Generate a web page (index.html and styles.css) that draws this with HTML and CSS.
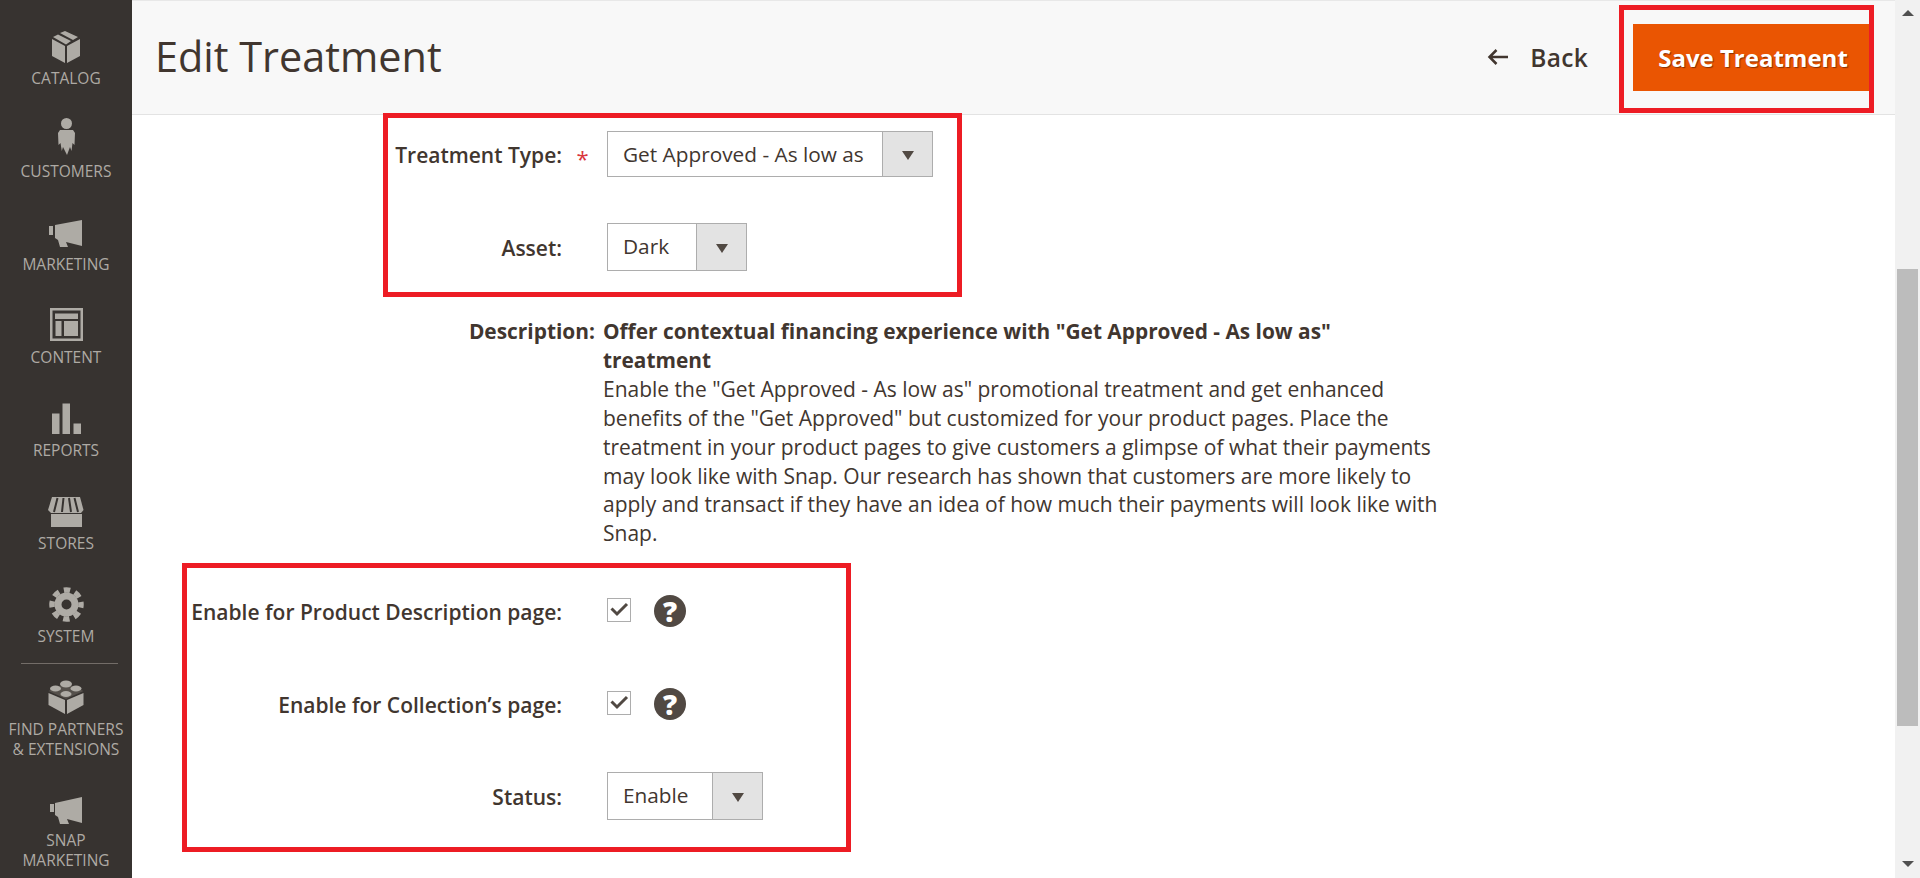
FILE: index.html
```html
<!DOCTYPE html>
<html lang="en">
<head>
<meta charset="utf-8">
<title>Edit Treatment</title>
<link rel="stylesheet" href="styles.css">
</head>
<body>
<div class="app">
  <nav class="sidebar">
    <div class="nav-item">
      <svg class="nav-icon" viewBox="0 0 132 45"><path d="M52 16 65 23V40L52 33ZM67 23 80 16V33L67 40ZM53 14 58 11.500 71 18 66 21.500ZM60 10 65 8 78 14 73 17Z"/></svg>
      <span class="nav-label">Catalog</span>
    </div>
    <div class="nav-item">
      <svg class="nav-icon" viewBox="0 0 132 45"><circle cx="66.500" cy="7.500" r="5.500"/><path d="M60 14H73L75 17 74.500 29 72.500 27 71.500 35 70 31 67 39 63 31 61.800 35 60.500 27 58.500 29 58 17Z"/></svg>
      <span class="nav-label">Customers</span>
    </div>
    <div class="nav-item">
      <svg class="nav-icon" viewBox="0 0 132 45"><path d="M49 17H53V26H49ZM55 16 82 11V37L66 33 68 38 60 38 58 31 55 29Z"/></svg>
      <span class="nav-label">Marketing</span>
    </div>
    <div class="nav-item">
      <svg class="nav-icon" viewBox="0 0 132 45"><path fill-rule="evenodd" d="M50 6H83V39H50ZM52.500 8.500V36.500H80.500V8.500Z"/><path d="M55 11.500H78V17H55ZM55.500 19H61.500V34H55.500ZM64 19H78V34H64Z"/></svg>
      <span class="nav-label">Content</span>
    </div>
    <div class="nav-item">
      <svg class="nav-icon" viewBox="0 0 132 45"><path d="M52 18.500H59.500V39H52ZM62.500 8.500H70V39H62.500ZM73.500 28.500H81V39H73.500Z"/></svg>
      <span class="nav-label">Reports</span>
    </div>
    <div class="nav-item">
      <svg class="nav-icon" viewBox="0 0 132 45"><path d="M52 9H80L83.500 22 81 25H51L48 22Z"/><path d="M51 26H82V39H51Z"/><path class="nav-cut" d="M57.500 10 54 24M63.500 10 62 24M69 10 71 24M74.500 10 78 24"/></svg>
      <span class="nav-label">Stores</span>
    </div>
    <div class="nav-item nav-item-last">
      <svg class="nav-icon" viewBox="0 0 132 45"><circle class="gear-body" cx="66.500" cy="23.500" r="8.500"/><circle class="gear-teeth" cx="66.500" cy="23.500" r="14.500"/></svg>
      <span class="nav-label">System</span>
    </div>
    <div class="nav-divider"></div>
    <div class="nav-item nav-item-wide">
      <svg class="nav-icon" viewBox="0 0 132 45"><path d="M48.500 19 65 26V40L48.500 31ZM67 26 83.500 19V31L67 40Z"/><path d="M48.500 17 66 9 83.500 17 66 25Z" class="lego-plate"/><ellipse cx="66" cy="10" rx="6" ry="3.500"/><ellipse cx="55.500" cy="14.500" rx="5.500" ry="3"/><ellipse cx="76" cy="14.500" rx="5.500" ry="3"/><ellipse cx="66" cy="20" rx="5.500" ry="3"/></svg>
      <span class="nav-label">Find Partners<br>&amp; Extensions</span>
    </div>
    <div class="nav-item">
      <svg class="nav-icon" viewBox="0 0 132 45"><path d="M50 19H54V27H50ZM55 18 82 12V38L67 34 69 39 60 39 58 32 55 30Z"/></svg>
      <span class="nav-label">Snap<br>Marketing</span>
    </div>
  </nav>

  <main class="main">
    <header class="page-header">
      <h1 class="page-title">Edit Treatment</h1>
      <div class="page-actions">
        <a class="back-link">
          <svg class="back-arrow" viewBox="0 0 22 18"><path d="M21 9H3M9.500 2 2.500 9 9.500 16"/></svg>
          <span>Back</span>
        </a>
        <button class="save-button">Save Treatment</button>
      </div>
      <div class="callout callout-save"></div>
    </header>

    <form class="form">
      <div class="callout callout-top"></div>
      <div class="callout callout-bottom"></div>

      <div class="field field-type">
        <label class="field-label">Treatment Type:</label>
        <span class="required">*</span>
        <div class="select select-type"><span class="select-text">Get Approved - As low as</span><span class="select-arrow"></span></div>
      </div>
      <div class="field field-asset">
        <label class="field-label">Asset:</label>
        <span></span>
        <div class="select select-asset"><span class="select-text">Dark</span><span class="select-arrow"></span></div>
      </div>

      <div class="description">
        <div class="description-label">Description:</div>
        <div class="description-body">
          <strong>Offer contextual financing experience with "Get Approved - As low as" treatment</strong><br>
          Enable the "Get Approved - As low as" promotional treatment and get enhanced benefits of the "Get Approved" but customized for your product pages. Place the treatment in your product pages to give customers a glimpse of what their payments may look like with Snap. Our research has shown that customers are more likely to apply and transact if they have an idea of how much their payments will look like with Snap.
        </div>
      </div>

      <div class="field field-check">
        <label class="field-label">Enable for Product Description page:</label>
        <span></span>
        <div class="check-wrap">
          <span class="checkbox"><svg viewBox="0 0 22 22"><path d="M3.500 9.500 9 15 19 5"/></svg></span>
          <span class="help">?</span>
        </div>
      </div>
      <div class="field field-check">
        <label class="field-label">Enable for Collection’s page:</label>
        <span></span>
        <div class="check-wrap">
          <span class="checkbox"><svg viewBox="0 0 22 22"><path d="M3.500 9.500 9 15 19 5"/></svg></span>
          <span class="help">?</span>
        </div>
      </div>
      <div class="field field-status">
        <label class="field-label">Status:</label>
        <span></span>
        <div class="select select-status"><span class="select-text">Enable</span><span class="select-arrow"></span></div>
      </div>
    </form>
  </main>

  <aside class="scrollbar">
    <span class="scroll-up"></span>
    <span class="scroll-thumb"></span>
    <span class="scroll-down"></span>
  </aside>
</div>
</body>
</html>
```

FILE: styles.css
```css
* { box-sizing: border-box; }
html, body { margin: 0; height: 100%; overflow: hidden; }
body { font-family: "Open Sans", "Noto Sans", sans-serif; color: #41362f; background: #fff; }

.app { display: grid; grid-template-columns: 132px 1fr 25px; height: 878px; }

.sidebar { background: #373330; padding-top: 23px; overflow: hidden; }
.nav-item { display: flex; flex-direction: column; height: 93px; }
.nav-item-last { height: 82px; }
.nav-item-wide { height: 111px; }
.nav-icon { display: block; width: 132px; height: 45px; fill: #aeaba5; flex: none; overflow: visible; }
.nav-cut { fill: none; stroke: #373330; stroke-width: 2; }
.gear-body { fill: none; stroke: #aeaba5; stroke-width: 7; }
.gear-teeth { fill: none; stroke: #aeaba5; stroke-width: 5.500; stroke-dasharray: 6.400 5; stroke-dashoffset: 3.200; }
.lego-plate { fill: #55504b; }
.nav-label { display: block; text-align: center; font-size: 15.500px; line-height: 20px; color: #aeaaa4; text-transform: uppercase; }
.nav-divider { height: 1px; width: 97px; margin: 0 0 10px 21px; background: #736d68; }

.main { position: relative; min-width: 0; }
.page-header { position: relative; height: 115px; background: #f8f8f8; border-top: 1px solid #e8e8e8; border-bottom: 1px solid #e3e3e3; display: flex; align-items: center; justify-content: space-between; padding: 0 0 0 23px; }
.page-title { margin: 0 0 3px; font-size: 41.400px; font-weight: 400; line-height: 54px; color: #41362f; }
.page-actions { display: flex; align-items: center; height: 67px; margin-bottom: 1px; }
.back-link { display: flex; align-items: center; gap: 21px; font-size: 24.500px; font-weight: 600; letter-spacing: 0.3px; color: #41362f; margin-right: 45px; }
.back-arrow { width: 22px; height: 18px; fill: none; stroke: #41362f; stroke-width: 2.500; }
.save-button { width: 240px; height: 67px; margin-right: 22px; border: 0; background: #ea5502; color: #fff; font: 700 24px "Open Sans", sans-serif; text-shadow: 1px 1px 1px #8a3000; padding: 0; }

.callout { position: absolute; border: 5px solid #ed1c24; pointer-events: none; }
.callout-save { left: 1487px; top: 4px; width: 255px; height: 108px; }
.callout-top { left: 251px; top: -2px; width: 579px; height: 184px; }
.callout-bottom { left: 50px; top: 448px; width: 669px; height: 289px; }

.form { position: relative; padding-top: 16px; }
.field { display: grid; grid-template-columns: 430px 45px auto; align-items: center; font-size: 21px; }
.field-label { text-align: right; font-weight: 600; color: #41362f; line-height: 28px; padding-top: 2px; }
.required { color: #d9363c; font-size: 22px; line-height: 22px; text-align: center; padding: 7px 4px 0 0; }
.field-type { height: 46px; margin-bottom: 46px; }
.field-asset { height: 48px; margin-bottom: 46px; }
.field-check { height: 32px; margin-bottom: 61px; }
.field-status { height: 48px; margin-top: -9px; }

.select { display: flex; height: 100%; border: 1px solid #adadad; background: #fff; }
.select-type { width: 326px; }
.select-asset { width: 140px; }
.select-status { width: 156px; }
.select-text { flex: 1; padding: 0 0 0 15px; font-size: 20.800px; line-height: 44px; color: #41362f; white-space: nowrap; }
.select-arrow { flex: none; display: flex; align-items: center; justify-content: center; width: 50px; background: #e3e3e3; border-left: 1px solid #adadad; }
.select-arrow::after { content: ""; margin-top: 2px; border-style: solid; border-width: 9px 6px 0; border-color: #514943 transparent transparent; }

.description { display: grid; grid-template-columns: 463px 837px; column-gap: 8px; font-size: 21px; line-height: 28.900px; margin-bottom: 47px; }
.description-label { text-align: right; font-weight: 700; font-size: 20.900px; }
.description-body strong { font-weight: 700; font-size: 20.850px; }

.check-wrap { display: flex; align-items: center; }
.checkbox { width: 24px; height: 24px; border: 1px solid #adadad; background: #fff; margin-top: -2px; }
.checkbox svg { display: block; width: 22px; height: 22px; fill: none; stroke: #514943; stroke-width: 3; }
.help { width: 32px; height: 32px; margin-left: 23px; border-radius: 50%; background: #514943; color: #fff; font-weight: 800; font-size: 28px; line-height: 32px; text-align: center; }

.scrollbar { position: relative; background: #f1f1f1; display: flex; flex-direction: column; align-items: center; }
.scroll-up { margin-top: 10px; border-style: solid; border-width: 0 6px 6px; border-color: transparent transparent #505050; }
.scroll-thumb { width: 21px; height: 457px; margin-top: 253px; background: #bcbcbc; }
.scroll-down { margin-top: 135px; border-style: solid; border-width: 6px 6px 0; border-color: #505050 transparent transparent; }
```
